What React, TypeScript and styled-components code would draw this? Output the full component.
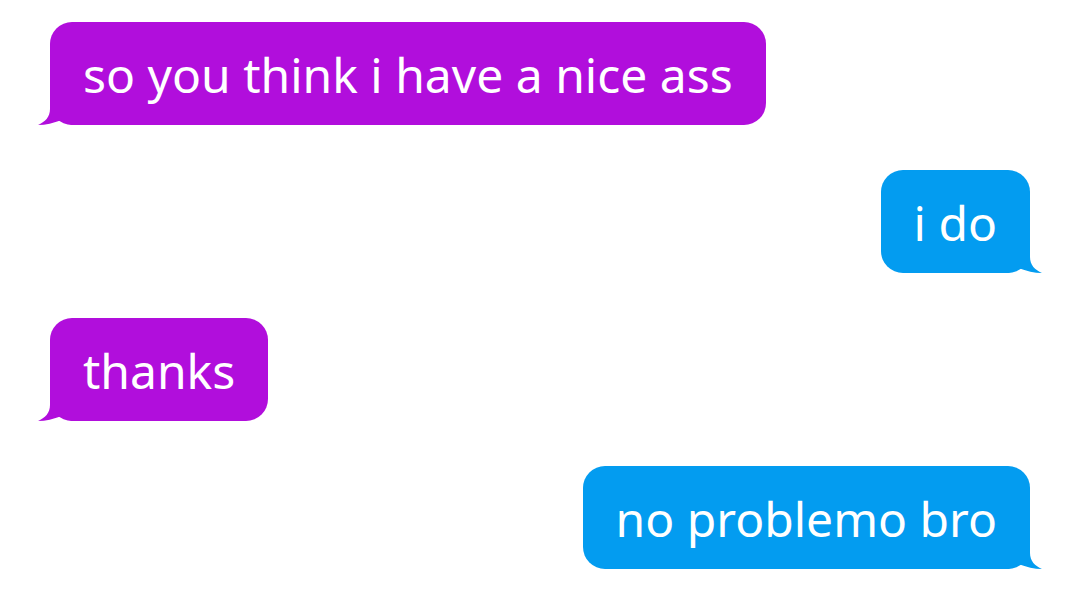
import React from "react";
import styled, { createGlobalStyle } from "styled-components";

const Global = createGlobalStyle`
  html, body { margin: 0; padding: 0; background: #ffffff; }
  body { width: 1080px; height: 596px; overflow: hidden; }
`;

const Thread = styled.div`
  display: flex;
  flex-direction: column;
  gap: 45px;
  padding: 22px 50px 0 50px;
  font-family: "Noto Sans", "Open Sans", sans-serif;
`;

const Bubble = styled.div<{ $side: "left" | "right"; $color: string }>`
  position: relative;
  align-self: ${(p) => (p.$side === "left" ? "flex-start" : "flex-end")};
  background: ${(p) => p.$color};
  color: #ffffff;
  height: 103px;
  box-sizing: border-box;
  padding: 0 33px;
  border-radius: 22px;
  display: flex;
  align-items: center;
  font-size: 48px;
  line-height: 1;
  white-space: nowrap;
`;

const Tail = styled.svg<{ $side: "left" | "right" }>`
  position: absolute;
  bottom: 0;
  width: 34px;
  height: 30px;
  ${(p) => (p.$side === "left" ? "left: -12px;" : "right: -12px; transform: scaleX(-1);")}
`;

const Text = styled.span`
  display: block;
  transform: translateY(1px);
`;

const PURPLE = "#B10EDC";
const BLUE = "#039CF0";

function Msg({ side, color, children }: { side: "left" | "right"; color: string; children: React.ReactNode }) {
  return (
    <Bubble $side={side} $color={color}>
      <Tail $side={side} viewBox="0 0 34 30">
        <path
          d="M12 0 L12 14 C12 22 7 27 0 30 C8 30 15 28 24 25 C27 27 30 29 34 30 L34 0 Z"
          fill={color}
        />
      </Tail>
      <Text>{children}</Text>
    </Bubble>
  );
}

export default function App() {
  return (
    <>
      <Global />
      <Thread>
        <Msg side="left" color={PURPLE}>so you think i have a nice ass</Msg>
        <Msg side="right" color={BLUE}>i do</Msg>
        <Msg side="left" color={PURPLE}>thanks</Msg>
        <Msg side="right" color={BLUE}>no problemo bro</Msg>
      </Thread>
    </>
  );
}
